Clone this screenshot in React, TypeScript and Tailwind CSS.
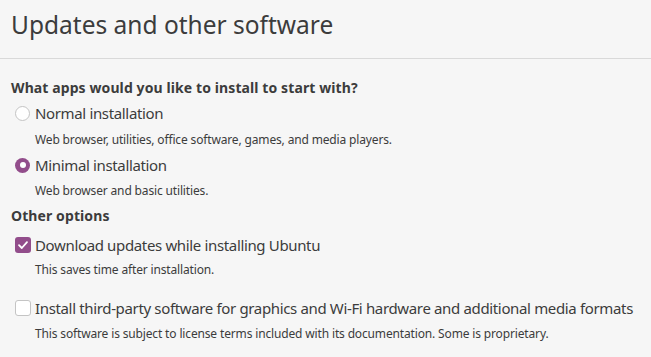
import React from "react";

const Radio = ({ checked }: { checked?: boolean }) =>
  checked ? (
    <span className="w-[15px] h-[15px] rounded-full bg-[#924d8b] flex items-center justify-center shrink-0">
      <span className="w-[6px] h-[6px] rounded-full bg-white" />
    </span>
  ) : (
    <span className="w-[15px] h-[15px] rounded-full border border-[#c4c4c4] bg-white shrink-0" />
  );

const Check = ({ checked }: { checked?: boolean }) =>
  checked ? (
    <span className="w-[16px] h-[16px] rounded-[3px] bg-[#924d8b] flex items-center justify-center shrink-0">
      <svg width="12" height="12" viewBox="0 0 12 12" fill="none">
        <path d="M2 6.2 L4.8 9 L10 3.2" stroke="white" strokeWidth="1.8" strokeLinecap="round" strokeLinejoin="round" />
      </svg>
    </span>
  ) : (
    <span className="w-[16px] h-[16px] rounded-[3px] border border-[#c4c4c4] bg-white shrink-0" />
  );

const Option = ({
  control,
  label,
  desc,
  mt,
  dmt,
  gap,
}: {
  control: React.ReactNode;
  label: string;
  desc: string;
  mt: string;
  dmt: string;
  gap: string;
}) => (
  <>
    <div className={`flex items-center h-[24px] pl-[15px] ${gap} ${mt}`}>
      {control}
      <span className="text-[15px] tracking-[-0.35px] whitespace-nowrap">{label}</span>
    </div>
    <div className={`pl-[35px] h-[24px] flex items-center text-[12px] tracking-[-0.15px] whitespace-nowrap ${dmt}`}>
      {desc}
    </div>
  </>
);

export default function App() {
  return (
    <div
      className="w-[651px] h-[357px] bg-[#f6f6f6] text-[#3c3c3c] overflow-hidden"
      style={{ fontFamily: "'Noto Sans', sans-serif" }}
    >
      <div className="h-[59px] border-b border-[#d9d9d9] px-[11px] pt-[8px]">
        <h1 className="text-[24.5px] leading-[34px]">Updates and other software</h1>
      </div>
      <div className="pt-[16px]">
        <div className="px-[11px] h-[24px] flex items-center text-[14px] font-bold tracking-[0.1px]">
          What apps would you like to install to start with?
        </div>
        <Option
          gap="gap-[5px]"
          mt="mt-[2px]"
          dmt="mt-[3px]"
          control={<Radio />}
          label="Normal installation"
          desc="Web browser, utilities, office software, games, and media players."
        />
        <Option
          gap="gap-[5px]"
          mt="mt-[1px]"
          dmt="mt-[2px]"
          control={<Radio checked />}
          label="Minimal installation"
          desc="Web browser and basic utilities."
        />
        <div className="px-[11px] h-[24px] flex items-center text-[14px] font-bold tracking-[0.1px]">
          Other options
        </div>
        <Option
          gap="gap-[4px]"
          mt="mt-[6px]"
          dmt="mt-[1px]"
          control={<Check checked />}
          label="Download updates while installing Ubuntu"
          desc="This saves time after installation."
        />
        <Option
          gap="gap-[4px]"
          mt="mt-[14px]"
          dmt="mt-[2px]"
          control={<Check />}
          label="Install third-party software for graphics and Wi-Fi hardware and additional media formats"
          desc="This software is subject to license terms included with its documentation. Some is proprietary."
        />
      </div>
    </div>
  );
}
